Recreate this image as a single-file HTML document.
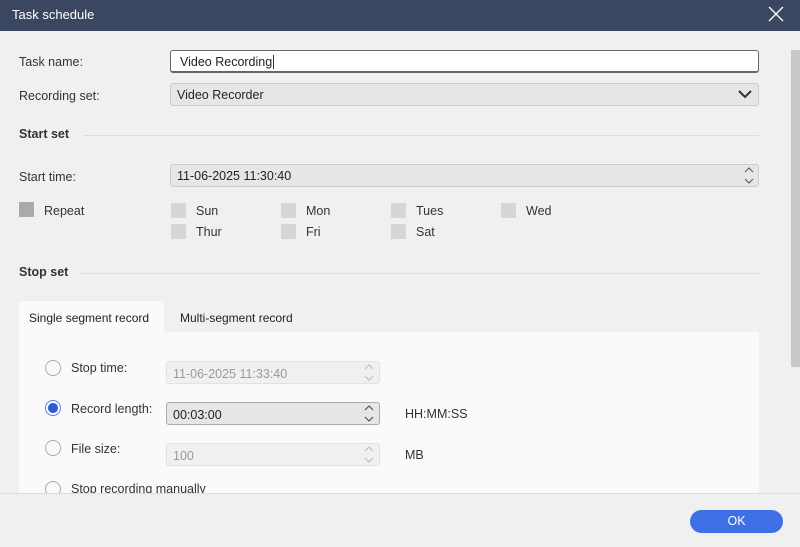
<!DOCTYPE html>
<html><head><style>
*{box-sizing:border-box;margin:0;padding:0}
body{width:800px;height:547px;background:#f0f0f0;font-family:"Liberation Sans",sans-serif;font-size:12.5px;color:#333;position:relative;overflow:hidden}
.a{position:absolute;white-space:nowrap}
.title{left:0;top:0;width:800px;height:31px;background:#3b4660;color:#fff;font-size:13px;padding:7px 12px}
.lbl{left:19px}
.box{border:1px solid #ccc;border-radius:3px;background:#e6e6e6;height:23px;padding:4px 6px}
.sec{font-weight:bold;left:19px}
.line{height:1px;background:#ddd}
.cb{width:15px;height:15px;background:#d6d6d6}
.rad{width:16px;height:16px;border:1px solid #aaa;border-radius:50%;background:#fafafa}
.dis{background:#f0f0f0;border:1px solid #e2e2e2;color:#999}
</style></head><body>
<div class="a title">Task schedule</div>
<svg class="a" style="left:768px;top:6px" width="16" height="16"><path d="M1 1L15 15M15 1L1 15" stroke="#fff" stroke-width="1.3"/></svg>
<div class="a" style="left:791px;top:50px;width:9px;height:317px;background:#c8c8c8"></div>

<div class="a lbl" style="top:55px">Task name:</div>
<div class="a box" style="left:170px;top:50px;width:589px;background:#fff;border:1px solid #666;border-bottom-width:2px;padding:4px 9px;color:#222">Video Recording<span style="border-left:1px solid #333;margin-left:1px"></span></div>
<div class="a lbl" style="top:89px">Recording set:</div>
<div class="a box" style="left:170px;top:83px;width:589px;color:#222">Video Recorder</div>
<svg class="a" style="left:738px;top:90px" width="14" height="9"><path d="M1 1L7 7L13 1" stroke="#333" stroke-width="2" fill="none"/></svg>

<div class="a sec" style="top:127px">Start set</div>
<div class="a line" style="left:83px;top:135px;width:676px"></div>
<div class="a lbl" style="top:170px">Start time:</div>
<div class="a box" style="left:170px;top:164px;width:589px;color:#222">11-06-2025 11:30:40</div>
<svg class="a" style="left:744px;top:166px" width="10" height="20"><path d="M1 6L5 2L9 6M1 13L5 17L9 13" stroke="#555" fill="none"/></svg>

<div class="a cb" style="left:19px;top:202px;background:#aaa"></div><div class="a" style="left:44px;top:204px">Repeat</div>
<div class="a cb" style="left:171px;top:203px"></div><div class="a" style="left:196px;top:204px">Sun</div>
<div class="a cb" style="left:281px;top:203px"></div><div class="a" style="left:306px;top:204px">Mon</div>
<div class="a cb" style="left:391px;top:203px"></div><div class="a" style="left:416px;top:204px">Tues</div>
<div class="a cb" style="left:501px;top:203px"></div><div class="a" style="left:526px;top:204px">Wed</div>
<div class="a cb" style="left:171px;top:224px"></div><div class="a" style="left:196px;top:225px">Thur</div>
<div class="a cb" style="left:281px;top:224px"></div><div class="a" style="left:306px;top:225px">Fri</div>
<div class="a cb" style="left:391px;top:224px"></div><div class="a" style="left:416px;top:225px">Sat</div>

<div class="a sec" style="top:265px">Stop set</div>
<div class="a line" style="left:80px;top:273px;width:679px"></div>

<div class="a" style="left:19px;top:301px;width:145px;height:32px;background:#fafafa;border-radius:4px 4px 0 0;padding:10px 0 0 10px;color:#222;font-size:12px">Single segment record</div>
<div class="a" style="left:180px;top:311px;color:#222;font-size:12px">Multi-segment record</div>
<div class="a" style="left:19px;top:332px;width:740px;height:161px;background:#fafafa"></div>

<div class="a rad" style="left:45px;top:360px"></div><div class="a" style="left:71px;top:361px">Stop time:</div>
<div class="a box dis" style="left:166px;top:361px;width:214px;padding-top:5px">11-06-2025 11:33:40</div>
<svg class="a" style="left:364px;top:363px" width="10" height="20"><path d="M1 6L5 2L9 6M1 13L5 17L9 13" stroke="#bbb" fill="none"/></svg>

<div class="a rad" style="left:45px;top:400px;border-color:#5b7fd8;background:radial-gradient(circle,#2d5bd6 0 4.5px,#fff 5.5px)"></div><div class="a" style="left:71px;top:402px">Record length:</div>
<div class="a box" style="left:166px;top:402px;width:214px;border-color:#aaa;color:#222;padding-top:5px">00:03:00</div>
<svg class="a" style="left:364px;top:404px" width="10" height="20"><path d="M1 6L5 2L9 6M1 13L5 17L9 13" stroke="#444" fill="none"/></svg>
<div class="a" style="left:405px;top:407px">HH:MM:SS</div>

<div class="a rad" style="left:45px;top:440px"></div><div class="a" style="left:71px;top:442px">File size:</div>
<div class="a box dis" style="left:166px;top:443px;width:214px;padding-top:5px">100</div>
<svg class="a" style="left:364px;top:445px" width="10" height="20"><path d="M1 6L5 2L9 6M1 13L5 17L9 13" stroke="#bbb" fill="none"/></svg>
<div class="a" style="left:405px;top:448px">MB</div>

<div class="a rad" style="left:45px;top:481px"></div><div class="a" style="left:71px;top:482px">Stop recording manually</div>

<div class="a" style="left:0;top:493px;width:800px;height:54px;background:#f0f0f0;border-top:1px solid #ddd"></div>
<div class="a" style="left:690px;top:510px;width:93px;height:23px;background:#3f6fe6;border-radius:12px;color:#fff;text-align:center;line-height:23px">OK</div>
</body></html>
